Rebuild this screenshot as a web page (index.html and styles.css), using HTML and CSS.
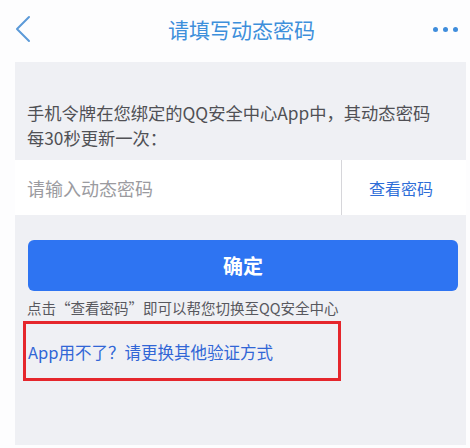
FILE: index.html
```html
<!DOCTYPE html>
<html lang="zh-CN">
<head>
    <meta charset="UTF-8">
    <meta name="viewport" content="width=device-width, initial-scale=1.0">
    <title>请填写动态密码</title>
    <link rel="stylesheet" href="styles.css">
</head>
<body>
    <div class="header">
        <svg class="back" width="18" height="28" viewBox="0 0 18 28">
            <path d="M15 2 L3 14 L15 26" fill="none" stroke="#5c9ad8" stroke-width="2" stroke-linecap="round" stroke-linejoin="round"/>
        </svg>
        <div class="title">请填写动态密码</div>
        <div class="more"><span></span><span></span><span></span></div>
    </div>

    <div class="panel">
        <div class="desc">手机令牌在您绑定的QQ安全中心App中，其动态密码每30秒更新一次：</div>
        <div class="input-row">
            <div class="placeholder">请输入动态密码</div>
            <div class="view">查看密码</div>
        </div>
        <div class="confirm">确定</div>
        <div class="hint">点击“查看密码”即可以帮您切换至QQ安全中心</div>
        <div class="mark">
            <span class="link">App用不了？请更换其他验证方式</span>
        </div>
    </div>
</body>
</html>
```

FILE: styles.css
```css
body, html {
    margin: 0;
    padding: 0;
    height: 100%;
    background: #fdfdfe;
    font-family: "Noto Sans CJK SC", "Noto Sans", sans-serif;
    overflow: hidden;
}
.header {
    height: 62px;
    display: flex;
    align-items: center;
    justify-content: space-between;
    padding: 0 12px 0 14px;
    box-sizing: border-box;
}
.back {
    margin-top: -4px;
}
.title {
    font-size: 21px;
    color: #3d8fdb;
    margin-left: 18px;
    margin-top: -4px;
}
.more {
    display: flex;
    gap: 5px;
    margin-top: -4px;
}
.more span {
    width: 5px;
    height: 5px;
    border-radius: 50%;
    background: #3f8ddc;
}
.panel {
    margin: 0 4px 0 15px;
    height: 383px;
    background: #eff0f4;
    display: flex;
    flex-direction: column;
}
.desc {
    padding: 38px 20px 10px 12px;
    font-size: 17.3px;
    line-height: 25px;
    color: #505055;
}
.input-row {
    height: 55px;
    background: #ffffff;
    display: flex;
    align-items: center;
}
.placeholder {
    flex: 1;
    padding-left: 12px;
    font-size: 18px;
    color: #9b9ba0;
    height: 100%;
    display: flex;
    align-items: center;
    border-right: 1px solid #d6d6da;
}
.view {
    width: 118px;
    padding-right: 6px;
    text-align: center;
    font-size: 16px;
    color: #2f6ed8;
}
.confirm {
    margin: 25px 8px 0 13px;
    height: 51px;
    border-radius: 6px;
    background: #2e74f2;
    color: #ffffff;
    font-size: 20px;
    font-weight: bold;
    display: flex;
    align-items: center;
    justify-content: center;
}
.hint {
    margin: 7px 0 0 12px;
    font-size: 14.5px;
    line-height: 20px;
    color: #58585e;
}
.mark {
    margin: 3px 0 0 8px;
    width: 310px;
    height: 54px;
    border: 3px solid #e5262c;
    display: flex;
    align-items: center;
    padding-left: 2px;
}
.link {
    font-size: 16.5px;
    color: #3166d6;
    margin-top: 2px;
}
```
